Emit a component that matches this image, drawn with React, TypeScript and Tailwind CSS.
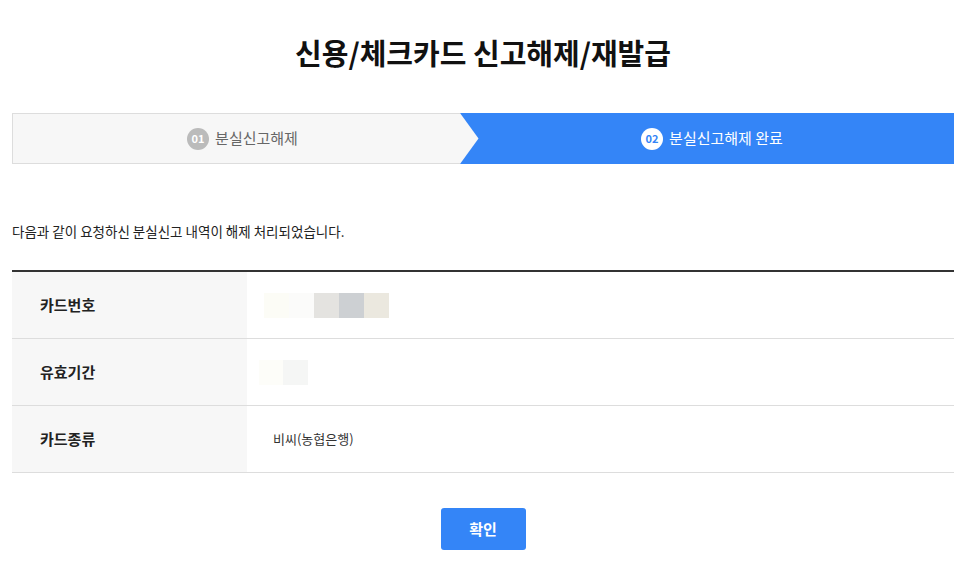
import React from "react";

const font = { fontFamily: '"Noto Sans CJK KR", "Noto Sans", sans-serif' };

function Row({ label, children }: { label: string; children: React.ReactNode }) {
  return (
    <div className="flex h-[67px] border-b border-[#dddddd]">
      <div className="w-[235px] bg-[#f7f7f7] flex items-center pl-[28px] text-[15px] font-bold text-[#222]">{label}</div>
      <div className="flex-1 flex items-center pl-[26px] text-[13px] text-[#333]">{children}</div>
    </div>
  );
}

export default function App() {
  return (
    <div className="w-[966px] h-[579px] bg-white px-[12px]" style={font}>
      <h1 className="pt-[30px] text-center text-[29px] font-bold text-[#111] leading-[44px]">신용/체크카드 신고해제/재발급</h1>
      <div className="mt-[39px] flex h-[51px]">
        <div className="w-[448px] bg-[#f7f7f7] border-y border-l border-[#dddddd] flex items-center justify-center gap-[6px] pl-[12px] text-[15px] text-[#666]">
          <span className="w-[22px] h-[22px] rounded-full bg-[#bbbbbb] text-white text-[11px] flex items-center justify-center font-bold">01</span>
          <span>분실신고해제</span>
        </div>
        <div className="flex-1 relative bg-[#3485f7] flex items-center justify-center gap-[6px] pl-[10px] text-[15px] text-white">
          <svg className="absolute left-0 top-0" width="19" height="51" viewBox="0 0 19 51">
            <polygon points="0,0 18.5,25.5 0,51" fill="#f7f7f7" />
          </svg>
          <span className="w-[22px] h-[22px] rounded-full bg-white text-[#3485f7] text-[11px] flex items-center justify-center font-bold">02</span>
          <span>분실신고해제 완료</span>
        </div>
      </div>
      <p className="mt-[57px] text-[13.5px] text-[#222] leading-[20px]">다음과 같이 요청하신 분실신고 내역이 해제 처리되었습니다.</p>
      <div className="mt-[29px] border-t-2 border-[#333333]">
        <Row label="카드번호">
          <div className="flex -ml-[9px]">
            <span className="w-[25px] h-[25px] bg-[#fcfcf6]" />
            <span className="w-[25px] h-[25px] bg-[#fbfbfa]" />
            <span className="w-[25px] h-[25px] bg-[#e4e3e0]" />
            <span className="w-[25px] h-[25px] bg-[#cdd0d3]" />
            <span className="w-[25px] h-[25px] bg-[#ebe8df]" />
          </div>
        </Row>
        <Row label="유효기간">
          <div className="flex -ml-[14px]">
            <span className="w-[24px] h-[25px] bg-[#fdfdf9]" />
            <span className="w-[25px] h-[25px] bg-[#f5f6f5]" />
          </div>
        </Row>
        <Row label="카드종류">비씨(농협은행)</Row>
      </div>
      <div className="mt-[35px] flex justify-center">
        <button className="w-[85px] h-[42px] rounded-[3px] bg-[#3485f7] text-white text-[15px] font-bold">확인</button>
      </div>
    </div>
  );
}
